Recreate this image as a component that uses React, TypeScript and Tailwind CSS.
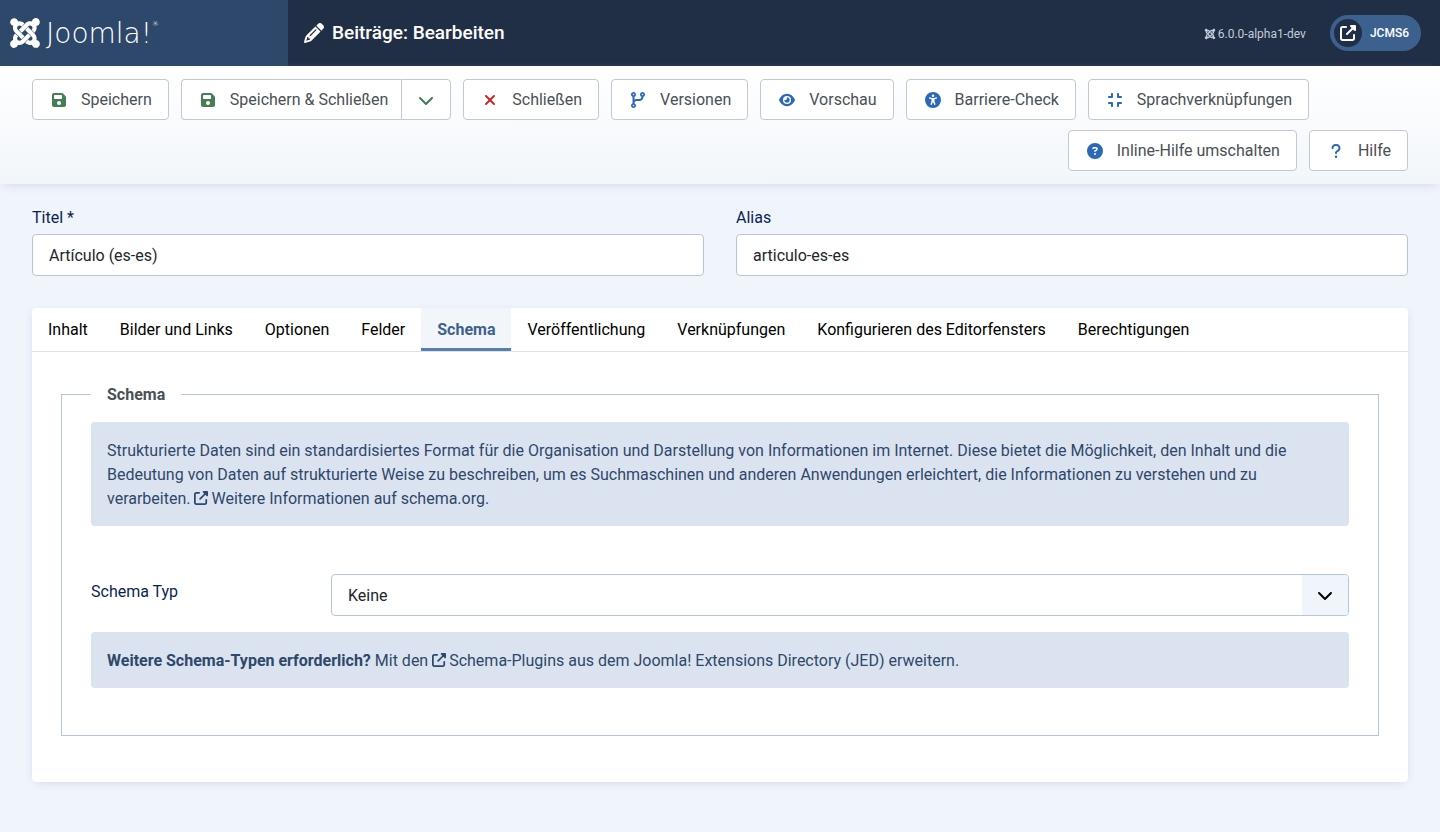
import type { ReactNode } from "react";
import type { IconType } from "react-icons";
import {
  FaChevronDown,
  FaCircleQuestion,
  FaCodeBranch,
  FaCompress,
  FaEye,
  FaFloppyDisk,
  FaJoomla,
  FaPencil,
  FaQuestion,
  FaUniversalAccess,
  FaUpRightFromSquare,
  FaXmark,
} from "react-icons/fa6";

const BUTTON =
  "flex h-[41px] items-center gap-3 rounded border border-[#c1c9d6] bg-white px-4 text-base text-[#495057]";

type ToolButtonProps = { icon: IconType; color: string; children: ReactNode; className?: string };

function ToolButton({ icon: Icon, color, children, className = "" }: ToolButtonProps) {
  return (
    <button type="button" className={`${BUTTON} ${className}`}>
      <span className={`flex w-5 justify-center ${color}`}>
        <Icon size={16} aria-hidden="true" />
      </span>
      {children}
    </button>
  );
}

function Header() {
  return (
    <header className="flex h-[66px] items-stretch bg-[#212f46] text-white">
      <a href="#" aria-label="Joomla!" className="flex w-72 items-center gap-1 bg-[#2e486b] px-2">
        <FaJoomla size={34} aria-hidden="true" />
        <span className="flex items-start pt-0.5 font-['DejaVu_Sans'] text-[28px] leading-8 font-extralight">
          Joomla!
          <span className="text-[7px] leading-3">®</span>
        </span>
      </a>
      <div className="flex flex-1 items-center justify-between pr-[19px] pl-4">
        <h1 className="flex items-center gap-2 text-[19px] font-medium">
          <FaPencil size={20} aria-hidden="true" />
          Beiträge: Bearbeiten
        </h1>
        <div className="flex items-center gap-6">
          <span className="flex items-center gap-0.5 pt-0.5 text-xs text-[#c3ccd9]">
            <FaJoomla size={12} aria-hidden="true" />
            6.0.0-alpha1-dev
          </span>
          <a
            href="#"
            className="flex h-9 items-center gap-2 rounded-full bg-[#3d618f] pr-3 pl-1 text-xs font-medium"
          >
            <span className="flex size-7 items-center justify-center rounded-full bg-[#212f46]">
              <FaUpRightFromSquare size={16} aria-hidden="true" />
            </span>
            JCMS6
          </a>
        </div>
      </div>
    </header>
  );
}

function Toolbar() {
  return (
    <div className="flex flex-wrap gap-x-3 gap-y-2.5 bg-linear-to-b from-white to-[#f2f6fa] px-8 py-[13px] shadow-[0_4px_10px_-4px_#c9d3e8]">
      <ToolButton icon={FaFloppyDisk} color="text-[#457d54]">Speichern</ToolButton>
      <div className="flex">
        <ToolButton icon={FaFloppyDisk} color="text-[#457d54]" className="rounded-r-none border-r-0 pr-[13px]">
          Speichern &amp; Schließen
        </ToolButton>
        <button
          type="button"
          aria-label="Weitere Aktionen"
          className="flex h-[41px] w-[50px] items-center justify-center rounded-r border border-[#c1c9d6] bg-white text-[#457d54]"
        >
          <FaChevronDown size={16} aria-hidden="true" />
        </button>
      </div>
      <ToolButton icon={FaXmark} color="text-[#c52827]">Schließen</ToolButton>
      <ToolButton icon={FaCodeBranch} color="text-[#2a69b8]">Versionen</ToolButton>
      <ToolButton icon={FaEye} color="text-[#2a69b8]">Vorschau</ToolButton>
      <ToolButton icon={FaUniversalAccess} color="text-[#2a69b8]">Barriere-Check</ToolButton>
      <ToolButton icon={FaCompress} color="text-[#2a69b8]">Sprachverknüpfungen</ToolButton>
      <ToolButton icon={FaCircleQuestion} color="text-[#2a69b8]" className="ml-auto">
        Inline-Hilfe umschalten
      </ToolButton>
      <ToolButton icon={FaQuestion} color="text-[#2a69b8]">Hilfe</ToolButton>
    </div>
  );
}

function TextField({ id, label, value }: { id: string; label: string; value: string }) {
  return (
    <div className="flex flex-col gap-1">
      <label htmlFor={id} className="text-[#0b1f55]">{label}</label>
      <input
        id={id}
        type="text"
        defaultValue={value}
        className="h-[42px] w-full rounded border border-[#b4c6e0] bg-white px-4 text-[#22262a]"
      />
    </div>
  );
}

const TABS = [
  "Inhalt",
  "Bilder und Links",
  "Optionen",
  "Felder",
  "Schema",
  "Veröffentlichung",
  "Verknüpfungen",
  "Konfigurieren des Editorfensters",
  "Berechtigungen",
];

function Notice({ children }: { children: ReactNode }) {
  return <p className="rounded bg-[#dce3f0] px-4 pt-[17px] pb-[15px] text-[#2e486b]">{children}</p>;
}

function ExternalLink({ children }: { children: ReactNode }) {
  return (
    <a href="#">
      <FaUpRightFromSquare size={14} aria-hidden="true" className="mr-[3px] inline align-[-1px]" />
      {children}
    </a>
  );
}

function SchemaPanel() {
  return (
    <div role="tabpanel" className="px-[29px] pt-[30px] pb-[46px]">
      <fieldset className="border border-[#b4c6e0] px-[29px] pb-[47px]">
        <legend className="h-6 px-4 leading-[26px] font-bold text-[#495057]">Schema</legend>
        <div className="flex flex-col pt-4">
          <Notice>
            Strukturierte Daten sind ein standardisiertes Format für die Organisation und Darstellung von
            Informationen im Internet. Diese bietet die Möglichkeit, den Inhalt und die Bedeutung von Daten auf
            strukturierte Weise zu beschreiben, um es Suchmaschinen und anderen Anwendungen erleichtert, die
            Informationen zu verstehen und zu verarbeiten.{" "}
            <ExternalLink>Weitere Informationen auf schema.org.</ExternalLink>
          </Notice>
          <div className="mt-12 mb-4 flex">
            <label htmlFor="schema-type" className="w-60 shrink-0 pt-1.5 text-[#0b1f55]">Schema Typ</label>
            <div className="grid flex-1">
              <select
                id="schema-type"
                className="col-start-1 row-start-1 h-[42px] w-full appearance-none rounded border border-[#b4c6e0] bg-white px-4 pt-0.5 text-[#22262a]"
              >
                <option>Keine</option>
              </select>
              <span className="pointer-events-none col-start-1 row-start-1 m-px flex w-[46px] items-center justify-center justify-self-end rounded-r-[3px] bg-[#f0f4fb] text-black">
                <FaChevronDown size={16} aria-hidden="true" />
              </span>
            </div>
          </div>
          <Notice>
            <strong className="font-bold">Weitere Schema-Typen erforderlich?</strong> Mit den{" "}
            <ExternalLink>Schema-Plugins aus dem Joomla! Extensions Directory (JED) erweitern.</ExternalLink>
          </Notice>
        </div>
      </fieldset>
    </div>
  );
}

export default function App() {
  return (
    <div className="min-h-screen bg-[#f0f4fb] font-['Roboto',sans-serif] text-base">
      <Header />
      <Toolbar />
      <main className="px-8 pt-[22px] pb-[50px]">
        <div className="grid grid-cols-2 gap-8">
          <TextField id="title" label="Titel *" value="Artículo (es-es)" />
          <TextField id="alias" label="Alias" value="articulo-es-es" />
        </div>
        <section className="mt-8 rounded bg-white shadow-[0_2px_10px_-4px_#b9c5dd]">
          <div role="tablist" className="flex h-11 border-b border-[#dce3ea]">
            {TABS.map((tab) => (
              <button
                key={tab}
                type="button"
                role="tab"
                aria-selected={tab === "Schema"}
                className={
                  tab === "Schema"
                    ? "border-b-3 border-[#5a7fac] bg-[#f2f6fa] px-4 pt-[3px] font-bold text-[#3d618f]"
                    : "px-4 text-black"
                }
              >
                {tab}
              </button>
            ))}
          </div>
          <SchemaPanel />
        </section>
      </main>
    </div>
  );
}
